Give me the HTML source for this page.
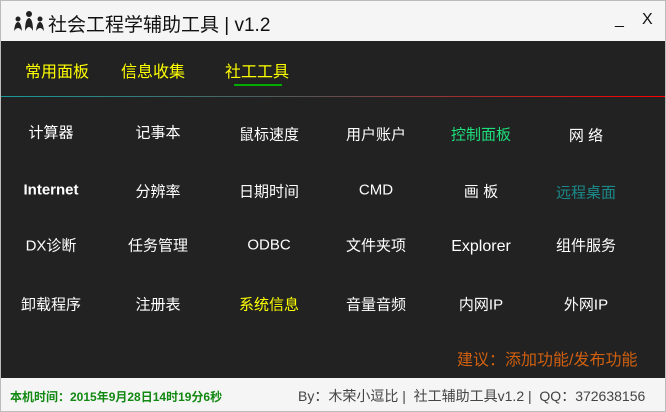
<!DOCTYPE html>
<html><head><meta charset="utf-8"><style>
body{margin:0;width:666px;height:412px;overflow:hidden;font-family:"Liberation Sans","Noto Sans CJK SC",sans-serif;background:#fff;position:relative}
.win{position:absolute;left:0;top:0;width:664px;height:410px;border:1px solid #bbb;background:#f5f5f5}
.title{position:absolute;left:47px;top:9px;font-size:19px;color:#111}
.ctl{position:absolute;top:10px;font-size:16px;color:#111}
.dark{position:absolute;left:0;top:40px;width:664px;height:337px;background:#222}
.tab{position:absolute;top:17px;font-size:16px;color:#ffff00}
.line{position:absolute;left:0;top:55px;width:664px;height:1px;background:linear-gradient(to right,#189a9a,#555 45%,#ff0000)}
.it{position:absolute;font-size:15px;color:#fff;transform:translate(-50%,-50%);white-space:nowrap}
.foot{position:absolute;top:387px;font-size:12px}
</style></head><body>
<div class="win">
<svg style="position:absolute;left:11px;top:10px" width="34" height="20" viewBox="0 0 34 20"><g fill="#222"><circle cx="17" cy="3" r="3"/><circle cx="6" cy="8" r="2.5"/><circle cx="28" cy="8" r="2.5"/><path d="M13 20 Q13 8 17 7 Q21 8 21 20 Q17 12 13 20Z"/><path d="M2 20 Q3 11 6 11 Q9 11 10 20 Q6 14 2 20Z"/><path d="M24 20 Q25 11 28 11 Q31 11 32 20 Q28 14 24 20Z"/></g></svg>
<div class="title">社会工程学辅助工具 | v1.2</div>
<div class="ctl" style="left:614px">_</div>
<div class="ctl" style="left:641px">X</div>
<div class="dark">
<div class="tab" style="left:24px">常用面板</div>
<div class="tab" style="left:120px">信息收集</div>
<div class="tab" style="left:224px">社工工具</div>
<div style="position:absolute;left:233px;top:43px;width:48px;height:2px;background:#0a0"></div>
<div class="line"></div>
</div>
<div class="it" style="left:50px;top:131px">计算器</div>
<div class="it" style="left:157px;top:131px">记事本</div>
<div class="it" style="left:268px;top:133px">鼠标速度</div>
<div class="it" style="left:375px;top:133px">用户账户</div>
<div class="it" style="left:480px;top:133px;color:#1de07c">控制面板</div>
<div class="it" style="left:585px;top:134px">网 络</div>
<div class="it" style="left:50px;top:189px;font-weight:bold">Internet</div>
<div class="it" style="left:157px;top:190px">分辨率</div>
<div class="it" style="left:268px;top:190px">日期时间</div>
<div class="it" style="left:375px;top:189px">CMD</div>
<div class="it" style="left:480px;top:190px">画 板</div>
<div class="it" style="left:585px;top:191px;color:#1a8a8a">远程桌面</div>
<div class="it" style="left:50px;top:244px">DX诊断</div>
<div class="it" style="left:157px;top:244px">任务管理</div>
<div class="it" style="left:268px;top:244px">ODBC</div>
<div class="it" style="left:375px;top:244px">文件夹项</div>
<div class="it" style="left:480px;top:246px;font-size:16px">Explorer</div>
<div class="it" style="left:585px;top:244px">组件服务</div>
<div class="it" style="left:50px;top:303px">卸载程序</div>
<div class="it" style="left:157px;top:303px">注册表</div>
<div class="it" style="left:268px;top:303px;color:#ffff00">系统信息</div>
<div class="it" style="left:375px;top:303px">音量音频</div>
<div class="it" style="left:480px;top:303px">内网IP</div>
<div class="it" style="left:585px;top:303px">外网IP</div>
<div style="position:absolute;left:456px;top:345px;font-size:16px;color:#d06010">建议：添加功能/发布功能</div>
<div class="foot" style="left:9px;color:#118811;font-weight:bold;font-size:12px">本机时间：2015年9月28日14时19分6秒</div>
<div class="foot" style="left:297px;color:#444;font-size:14px;top:385px">By：木荣小逗比 |&nbsp; 社工辅助工具v1.2 |&nbsp; QQ：372638156</div>
</div>
</body></html>
